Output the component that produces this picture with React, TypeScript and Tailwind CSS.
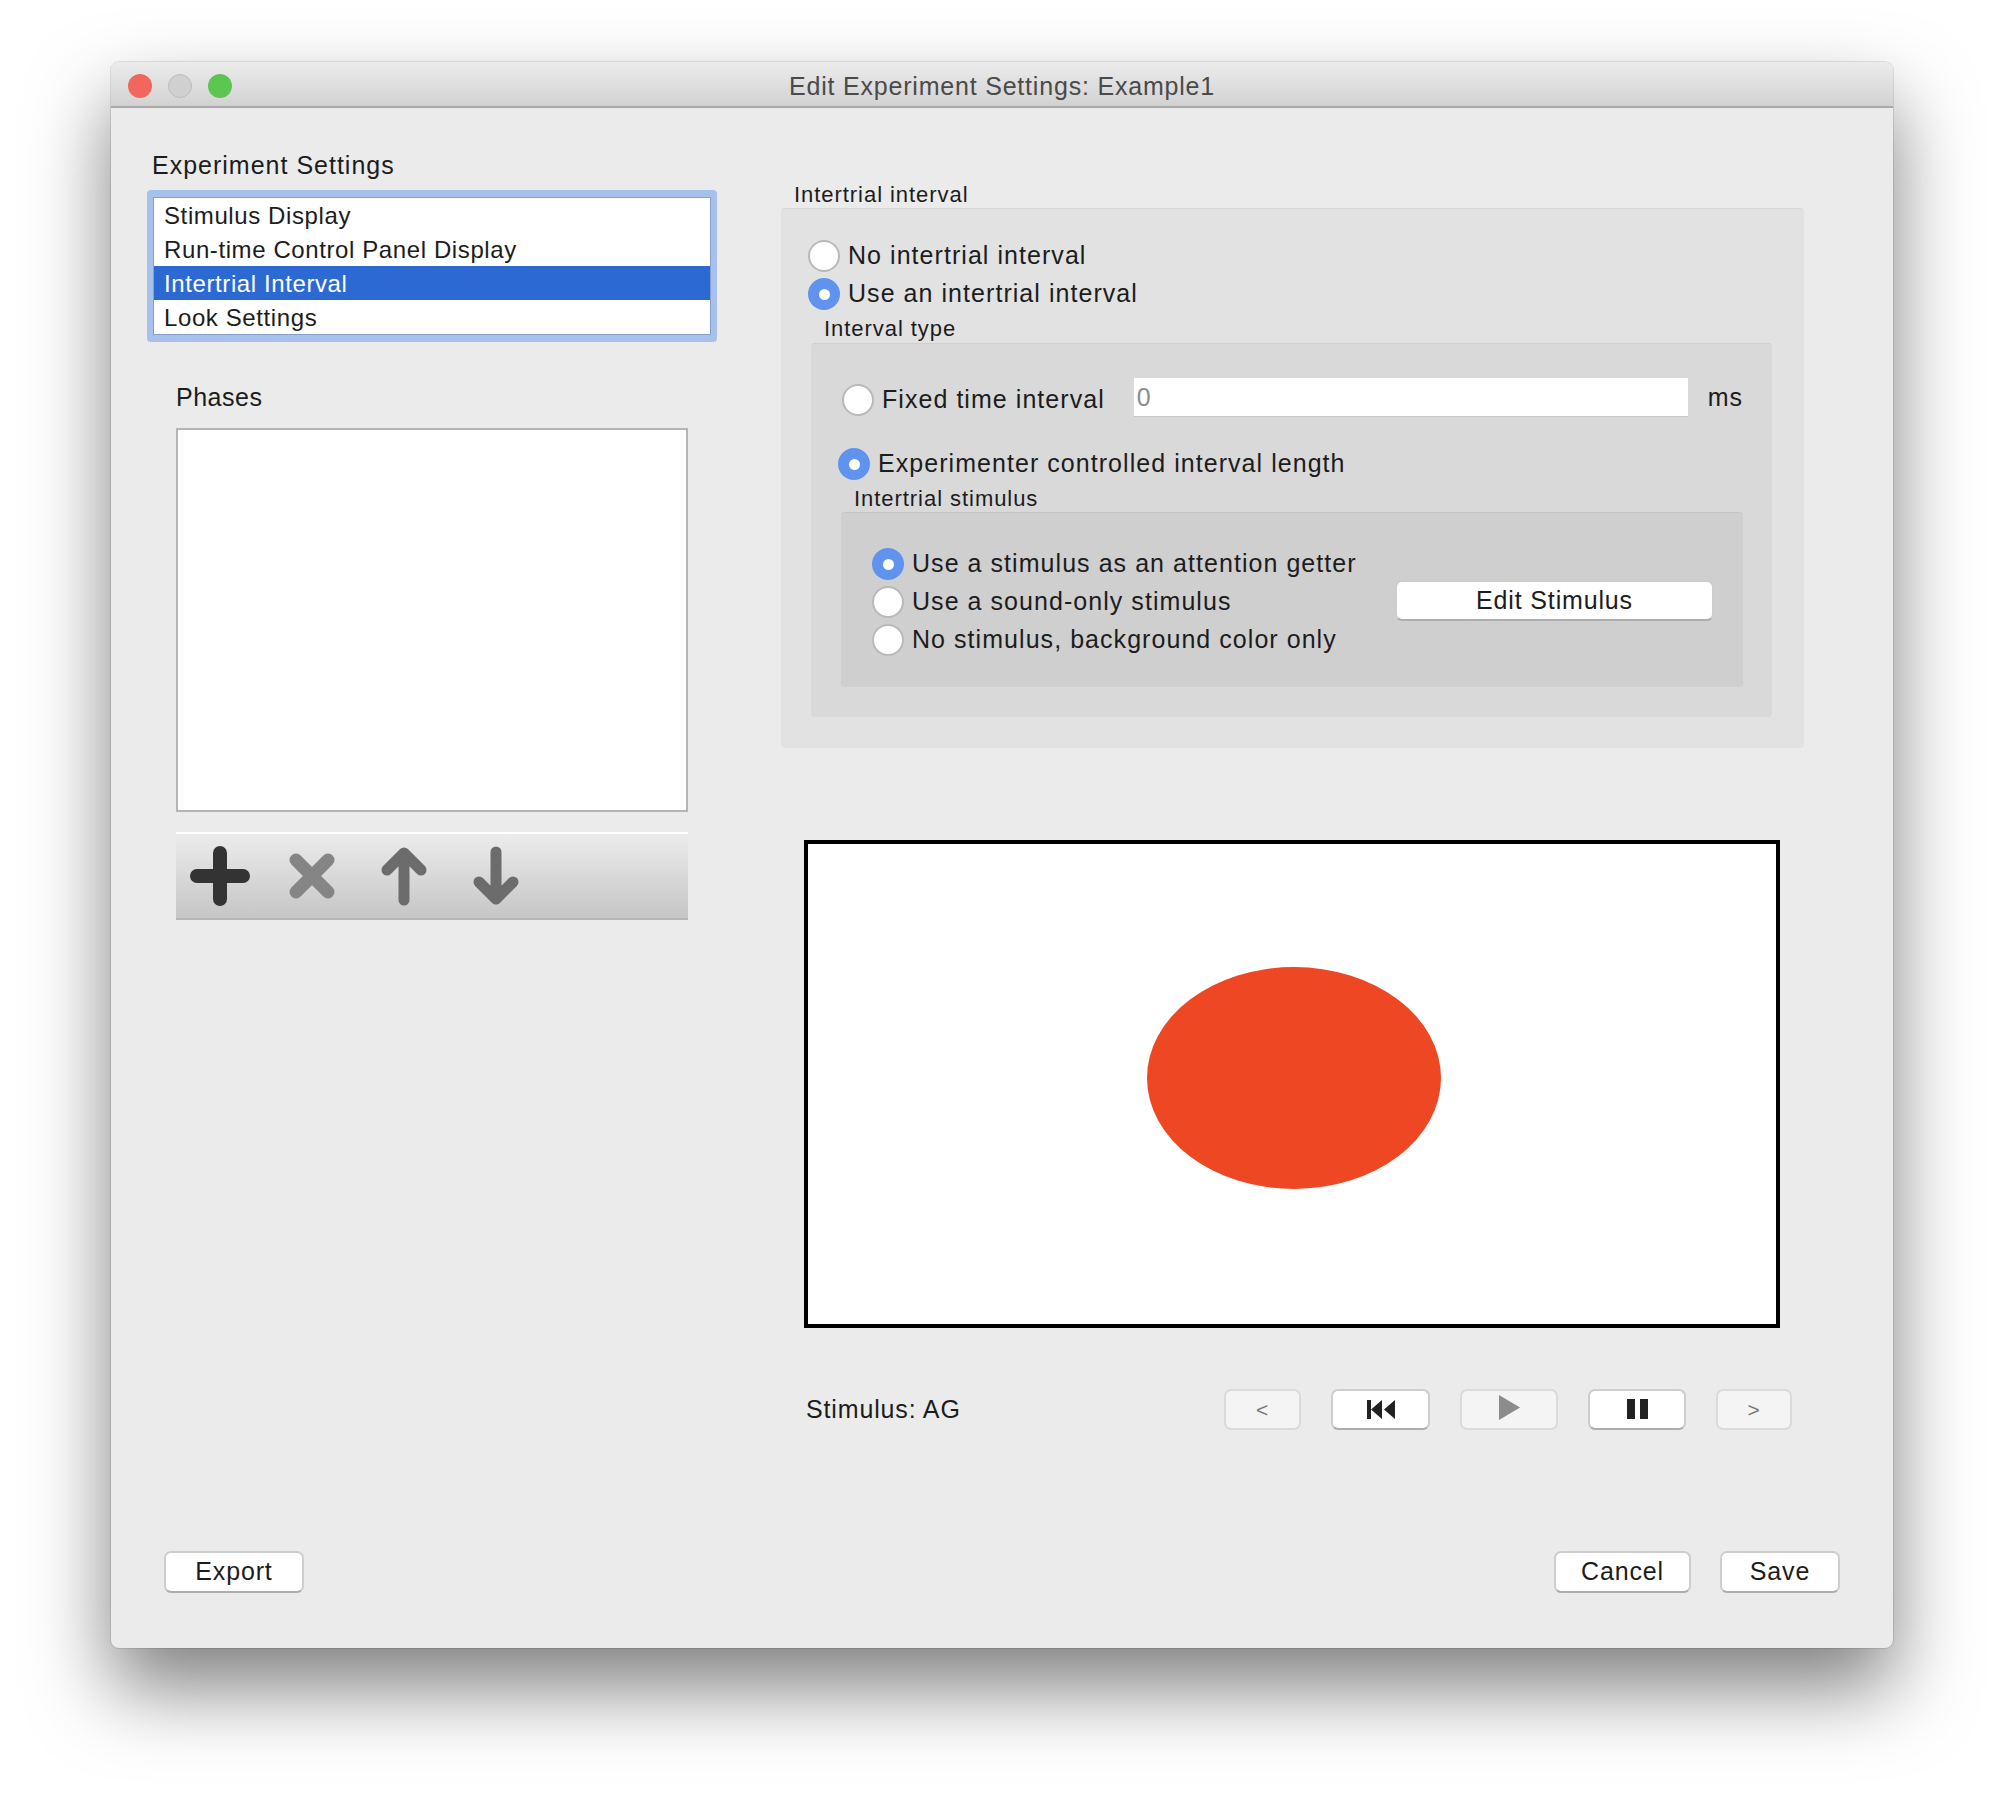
type RadioPropsType = {
  checked?: boolean;
  label: string;
};

const Radio = (props: RadioPropsType) => {
  return (
    <div className="flex items-center h-[38px] gap-[8px] text-[25px] text-[#1c1c1c] tracking-[1.05px]">
      {props.checked ? (
        <div className="w-[32px] h-[32px] rounded-full bg-[#5f93ee] flex items-center justify-center shrink-0">
          <div className="w-[11px] h-[11px] rounded-full bg-white" />
        </div>
      ) : (
        <div className="w-[32px] h-[32px] rounded-full bg-white border-2 border-[#b9b9b9] shrink-0" />
      )}
      <span className="whitespace-nowrap pb-[1px]">{props.label}</span>
    </div>
  );
};

const GroupLabel = (props: { label: string; className: string }) => {
  return (
    <div className={`text-[22px] leading-[29px] text-[#1c1c1c] tracking-[0.95px] ${props.className}`}>
      {props.label}
    </div>
  );
};

const Button = (props: { className: string; disabled?: boolean; children: React.ReactNode }) => {
  const look = props.disabled
    ? "bg-[#f4f4f4] border-[#dadada]"
    : "bg-white border-[#cdcdcd] border-b-[#adadad]";
  return (
    <div className={`flex items-center justify-center rounded-[7px] border-2 text-[25px] tracking-[0.85px] text-[#1c1c1c] ${look} ${props.className}`}>
      {props.children}
    </div>
  );
};

const listItems = ["Stimulus Display", "Run-time Control Panel Display", "Intertrial Interval", "Look Settings"];

const App = () => {
  return (
    <div
      className="w-[2004px] h-[1808px] bg-white overflow-hidden pt-[62px] pl-[111px]"
      style={{ fontFamily: '"Liberation Sans", Arial, sans-serif' }}
    >
      <div className="w-[1782px] h-[1586px] rounded-[8px] bg-[#ebebeb] flex flex-col overflow-hidden shadow-[0_40px_80px_rgba(0,0,0,0.5),0_0_0_1px_rgba(0,0,0,0.1)]">
        {/* title bar */}
        <div className="h-[46px] shrink-0 relative flex items-center justify-center bg-gradient-to-b from-[#ececec] to-[#d2d2d2] border-b-2 border-[#a9a9a9]">
          <div className="absolute left-[17px] top-[12px] flex gap-[16px]">
            <div className="w-[24px] h-[24px] rounded-full bg-[#f1675d]" />
            <div className="w-[24px] h-[24px] rounded-full bg-[#d0d0d0] border border-[#bdbdbd]" />
            <div className="w-[24px] h-[24px] rounded-full bg-[#5dc650]" />
          </div>
          <div className="text-[25px] text-[#4a4a4a] tracking-[0.8px] mt-[5px]">Edit Experiment Settings: Example1</div>
        </div>

        <div className="flex flex-1">
          {/* left column */}
          <div className="w-[570px] ml-[36px] pt-[42px] shrink-0">
            <div className="text-[25px] leading-[30px] text-[#1c1c1c] ml-[5px] tracking-[1px]">Experiment Settings</div>
            <div className="mt-[10px] rounded-[4px] bg-[#a6c1ec] py-[7px] px-[6px]">
              <div className="border border-[#869fcb] bg-white">
                {listItems.map((item) => (
                  <div
                    key={item}
                    className={
                      item === "Intertrial Interval"
                        ? "h-[34px] pl-[10px] pt-[1px] flex items-center text-[24px] tracking-[0.6px] bg-[#2c69d3] text-white"
                        : "h-[34px] pl-[10px] pt-[1px] flex items-center text-[24px] tracking-[0.6px] text-[#1c1c1c]"
                    }
                  >
                    {item}
                  </div>
                ))}
              </div>
            </div>

            <div className="ml-[29px] w-[512px]">
              <div className="mt-[40px] text-[25px] leading-[30px] tracking-[0.5px] text-[#1c1c1c]">Phases</div>
              <div className="mt-[16px] h-[384px] bg-white border-2 border-[#b5b5b5]" />
              <div className="mt-[20px] h-[88px] flex items-center gap-[32px] pl-[14px] bg-gradient-to-b from-[#ececec] to-[#c6c6c6] border-t-2 border-t-white border-b-2 border-b-[#b5b5b5]">
                <svg width="60" height="60" viewBox="0 0 60 60" stroke="#333333" strokeWidth="14" strokeLinecap="round" fill="none">
                  <path d="M30 7v46M7 30h46" />
                </svg>
                <svg width="60" height="60" viewBox="0 0 60 60" stroke="#858585" strokeWidth="13" strokeLinecap="round" fill="none">
                  <path d="M14 14l32 32M46 14L14 46" />
                </svg>
                <svg width="60" height="60" viewBox="0 0 60 60" stroke="#6c6c6c" strokeWidth="11" strokeLinecap="round" strokeLinejoin="round" fill="none">
                  <path d="M30 54V7M13 24L30 7l17 17" />
                </svg>
                <svg width="60" height="60" viewBox="0 0 60 60" stroke="#6c6c6c" strokeWidth="11" strokeLinecap="round" strokeLinejoin="round" fill="none">
                  <path d="M30 6v47M13 36l17 17 17-17" />
                </svg>
              </div>
            </div>
          </div>

          {/* right column */}
          <div className="w-[1024px] ml-[63px] pt-[72px] shrink-0">
            <GroupLabel label="Intertrial interval" className="ml-[14px] mb-[-1px]" />
            <div className="ml-[1px] w-[1023px] h-[540px] rounded-[4px] bg-[#e2e2e2] border-t border-[#d8d8d8] pt-[28px]">
              <div className="pl-[27px]">
                <Radio label="No intertrial interval" />
                <Radio checked label="Use an intertrial interval" />
              </div>
              <GroupLabel label="Interval type" className="ml-[43px] mt-[1px]" />
              <div className="ml-[30px] w-[961px] h-[374px] rounded-[4px] bg-[#d9d9d9] border-t border-[#cfcfcf] pt-[34px]">
                <div className="flex items-center pl-[31px] h-[38px]">
                  <div className="mt-[6px]">
                    <Radio label="Fixed time interval" />
                  </div>
                  <div className="ml-[29px] w-[554px] h-[39px] bg-white border-b border-[#c6c6c6] pl-[3px] pt-[2px] flex items-center text-[25px] text-[#8c8c8c]">
                    0
                  </div>
                  <div className="ml-[20px] pt-[2px] text-[25px] tracking-[0.8px] text-[#1c1c1c]">ms</div>
                </div>
                <div className="pl-[27px] mt-[29px]">
                  <Radio checked label="Experimenter controlled interval length" />
                </div>
                <GroupLabel label="Intertrial stimulus" className="ml-[43px] pt-[1px] h-[29px]" />
                <div className="ml-[30px] w-[902px] h-[175px] rounded-[4px] bg-[#cfcfcf] border-t border-[#c6c6c6] pt-[32px] pl-[31px] pr-[29px]">
                  <div className="flex items-center justify-between">
                    <div>
                      <Radio checked label="Use a stimulus as an attention getter" />
                      <Radio label="Use a sound-only stimulus" />
                      <Radio label="No stimulus, background color only" />
                    </div>
                    <Button className="w-[319px] h-[41px] mb-[3px]">Edit Stimulus</Button>
                  </div>
                </div>
              </div>
            </div>

            {/* stimulus preview */}
            <div className="mt-[92px] ml-[24px] w-[976px] h-[488px] bg-white border-4 border-black flex items-center justify-center">
              <div className="w-[294px] h-[222px] rounded-[50%] bg-[#ed4724] ml-[4px] mb-[12px]" />
            </div>

            <div className="mt-[61px] flex items-center">
              <div className="ml-[26px] text-[25px] text-[#1c1c1c] w-[418px] tracking-[0.85px]">Stimulus: AG</div>
              <div className="flex gap-[30px]">
                <Button disabled className="w-[77px] h-[41px]">
                  <span className="text-[21px] text-[#777777]">&lt;</span>
                </Button>
                <Button className="w-[99px] h-[41px]">
                  <svg width="28" height="19" viewBox="0 0 28 19" fill="#222222">
                    <path d="M0 0h4v19H0zM15 0v19L4 9.5zM28 0v19L17 9.5z" />
                  </svg>
                </Button>
                <Button disabled className="w-[98px] h-[41px]">
                  <svg width="21" height="25" viewBox="0 0 21 25" fill="#8c8c8c" className="mb-[5px]">
                    <path d="M0 0l21 12.5L0 25z" />
                  </svg>
                </Button>
                <Button className="w-[98px] h-[41px]">
                  <svg width="21" height="20" viewBox="0 0 21 20" fill="#222222" className="mb-[1px]">
                    <path d="M0 0h8v20H0zM13 0h8v20h-8z" />
                  </svg>
                </Button>
                <Button disabled className="w-[76px] h-[41px]">
                  <span className="text-[21px] text-[#777777]">&gt;</span>
                </Button>
              </div>
            </div>
          </div>
        </div>

        {/* footer */}
        <div className="flex items-center pl-[53px] pr-[53px] pb-[55px] shrink-0">
          <Button className="w-[140px] h-[42px]">Export</Button>
          <div className="ml-auto flex gap-[29px]">
            <Button className="w-[137px] h-[42px]">Cancel</Button>
            <Button className="w-[120px] h-[42px]">Save</Button>
          </div>
        </div>
      </div>
    </div>
  );
};

export default App;
